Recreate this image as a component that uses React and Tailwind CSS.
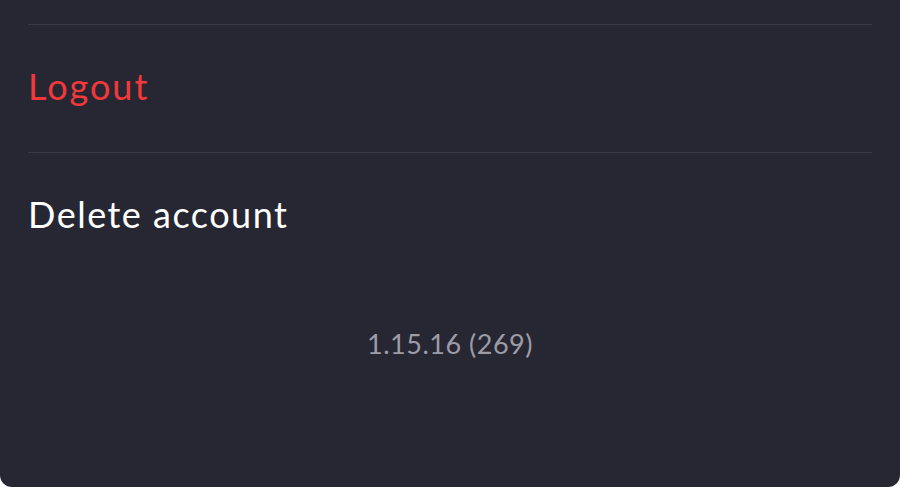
export default function App() {
  return (
    <div className="w-[900px] h-[487px] bg-white">
      <div
        className="h-full bg-[#272733] rounded-b-[12px] px-7 pt-6"
        style={{ fontFamily: "Lato, 'Open Sans', sans-serif" }}
      >
        <div className="border-t border-[#3a3a47] h-[128px] flex items-center pb-[6px]">
          <span className="text-[#f2383a] text-[36px] tracking-[2px]">Logout</span>
        </div>
        <div className="border-t border-[#3a3a47] h-[128px] flex items-center pb-[6px]">
          <span className="text-white text-[36px] tracking-[1.5px]">Delete account</span>
        </div>
        <div className="flex justify-center pt-[44px]">
          <span className="text-[#9d9ca6] text-[27px] tracking-[0.5px]">1.15.16 (269)</span>
        </div>
      </div>
    </div>
  );
}
